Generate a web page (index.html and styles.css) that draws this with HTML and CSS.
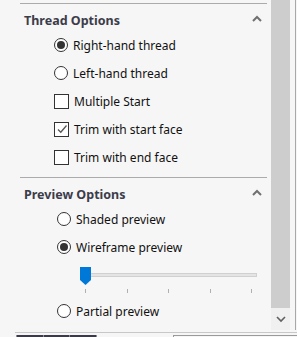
FILE: index.html
```html
<!DOCTYPE html>
<html lang="en">
  <head>
    <meta charset="utf-8">
    <title>Thread options</title>
    <link rel="stylesheet" href="styles.css">
  </head>
  <body>
    <div class="frame">
      <div class="panel">
        <section class="group">
          <div class="group_head">
            <span class="group_title">Thread Options</span>
            <svg class="chevron" width="10" height="7" viewBox="0 0 10 7"><path d="M1 6 L5 2 L9 6" fill="none" stroke="#707070" stroke-width="2"/></svg>
          </div>
          <div class="opt thread_opt"><span class="radio on"></span>Right-hand thread</div>
          <div class="opt thread_opt"><span class="radio"></span>Left-hand thread</div>
          <div class="opt thread_opt"><span class="check"></span>Multiple Start</div>
          <div class="opt thread_opt">
            <span class="check">
              <svg width="12" height="12" viewBox="0 0 12 12"><path d="M2 6.5 L4.8 9.2 L10.5 2.5" fill="none" stroke="#555" stroke-width="1.3"/></svg>
            </span>Trim with start face
          </div>
          <div class="opt thread_opt"><span class="check"></span>Trim with end face</div>
        </section>
        <section class="group">
          <div class="group_head">
            <span class="group_title">Preview Options</span>
            <svg class="chevron" width="10" height="7" viewBox="0 0 10 7"><path d="M1 6 L5 2 L9 6" fill="none" stroke="#707070" stroke-width="2"/></svg>
          </div>
          <div class="opt preview_opt"><span class="radio"></span>Shaded preview</div>
          <div class="opt preview_opt"><span class="radio on"></span>Wireframe preview</div>
          <div class="slider">
            <div class="track">
              <svg class="thumb" width="11" height="18" viewBox="0 0 11 18"><path d="M0 0 H11 V13 L5.5 18 L0 13 Z" fill="#0078d7"/></svg>
            </div>
            <div class="ticks">
              <span></span><span></span><span></span><span></span><span></span>
            </div>
          </div>
          <div class="opt preview_opt"><span class="radio"></span>Partial preview</div>
        </section>
      </div>
      <div class="scrollbar">
        <div class="scroll_thumb"></div>
        <div class="scroll_down">
          <svg width="10" height="7" viewBox="0 0 10 7"><path d="M1 1 L5 5 L9 1" fill="none" stroke="#606060" stroke-width="1.6"/></svg>
        </div>
      </div>
      <div class="edge"></div>
    </div>
    <div class="bottom">
      <div class="tabs"><span></span><span></span><span></span><span></span></div>
      <div class="tab_gap"></div>
      <div class="tab_other"></div>
    </div>
  </body>
</html>
```

FILE: styles.css
```css
html, body {
  margin:0;
  padding:0;
}
body {
  background-color:#f6f6f6;
  font-family: 'Noto Sans', 'Open Sans', sans-serif;
  font-size:12px;
  color:#111;
  width:297px;
  height:337px;
  overflow:hidden;
}

.frame {
  display:flex;
  flex-direction:row;
  height:330px;
}
.panel {
  width:247px;
  margin-left:20px;
  padding-top:3px;
}
.group {
  border-top:1px solid #ababab;
  padding-bottom:6px;
}
.group_head {
  height:27px;
  display:flex;
  align-items:center;
  justify-content:space-between;
  padding-left:4px;
  padding-right:5px;
  padding-top:5px;
  box-sizing:border-box;
}
.group_title {
  font-weight:bold;
  font-size:12.5px;
  color:#3c3c4a;
}
.chevron {
  margin-top:-3px;
}

.opt {
  height:28px;
  display:flex;
  align-items:center;
  gap:5px;
}
.thread_opt {
  padding-left:34px;
}
.preview_opt {
  padding-left:37px;
}
.radio {
  width:14px;
  height:14px;
  box-sizing:border-box;
  border:1px solid #333;
  border-radius:50%;
  background-color:#fff;
  display:flex;
  align-items:center;
  justify-content:center;
}
.radio.on::after {
  content:'';
  width:8px;
  height:8px;
  border-radius:50%;
  background-color:#333;
}
.check {
  width:15px;
  height:15px;
  box-sizing:border-box;
  border:1px solid #333;
  background-color:#fff;
  display:flex;
  align-items:center;
  justify-content:center;
}

.slider {
  height:36px;
  margin-left:60px;
  width:177px;
  display:flex;
  flex-direction:column;
}
.track {
  position:relative;
  margin-top:12px;
  height:4px;
  box-sizing:border-box;
  background-color:#e4e4e4;
  border:1px solid #d0d0d0;
}
.thumb {
  position:absolute;
  left:-1px;
  top:-7px;
}
.ticks {
  margin-top:12px;
  padding:0 5px;
  display:flex;
  justify-content:space-between;
}
.ticks span {
  width:1px;
  height:4px;
  background-color:#b0b0b0;
}

.scrollbar {
  width:19px;
  margin-left:4px;
  display:flex;
  flex-direction:column;
}
.scroll_thumb {
  flex-grow:1;
  background-color:#cdcdcd;
  height:308px;
}
.scroll_down {
  height:22px;
  background-color:#f0f0f0;
  display:flex;
  align-items:center;
  justify-content:center;
}
.edge {
  width:1px;
  margin-left:5px;
  background-color:#a8a8a8;
}

.bottom {
  margin-top:2px;
  margin-left:15px;
  border-top:1px solid #c8c8c8;
  display:flex;
  height:4px;
  padding-top:2px;
}
.tabs {
  width:81px;
  margin-left:1px;
  background-color:#3b3b48;
  display:flex;
  justify-content:space-between;
}
.tabs span {
  width:1px;
  background-color:#8a8a98;
}
.tab_gap {
  width:76px;
}
.tab_other {
  flex-grow:1;
  border-top:1px solid #9a9a9a;
  border-left:1px solid #9a9a9a;
}
```
